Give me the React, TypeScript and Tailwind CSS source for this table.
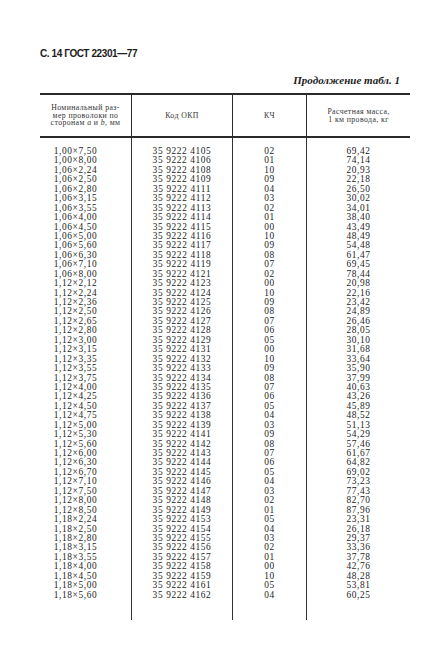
const rows: [string, string, string, string][] = [
  ['1,00×7,50', '4105', '02', '69,42'],
  ['1,00×8,00', '4106', '01', '74,14'],
  ['1,06×2,24', '4108', '10', '20,93'],
  ['1,06×2,50', '4109', '09', '22,18'],
  ['1,06×2,80', '4111', '04', '26,50'],
  ['1,06×3,15', '4112', '03', '30,02'],
  ['1,06×3,55', '4113', '02', '34,01'],
  ['1,06×4,00', '4114', '01', '38,40'],
  ['1,06×4,50', '4115', '00', '43,49'],
  ['1,06×5,00', '4116', '10', '48,49'],
  ['1,06×5,60', '4117', '09', '54,48'],
  ['1,06×6,30', '4118', '08', '61,47'],
  ['1,06×7,10', '4119', '07', '69,45'],
  ['1,06×8,00', '4121', '02', '78,44'],
  ['1,12×2,12', '4123', '00', '20,98'],
  ['1,12×2,24', '4124', '10', '22,16'],
  ['1,12×2,36', '4125', '09', '23,42'],
  ['1,12×2,50', '4126', '08', '24,89'],
  ['1,12×2,65', '4127', '07', '26,46'],
  ['1,12×2,80', '4128', '06', '28,05'],
  ['1,12×3,00', '4129', '05', '30,10'],
  ['1,12×3,15', '4131', '00', '31,68'],
  ['1,12×3,35', '4132', '10', '33,64'],
  ['1,12×3,55', '4133', '09', '35,90'],
  ['1,12×3,75', '4134', '08', '37,99'],
  ['1,12×4,00', '4135', '07', '40,63'],
  ['1,12×4,25', '4136', '06', '43,26'],
  ['1,12×4,50', '4137', '05', '45,89'],
  ['1,12×4,75', '4138', '04', '48,52'],
  ['1,12×5,00', '4139', '03', '51,13'],
  ['1,12×5,30', '4141', '09', '54,29'],
  ['1,12×5,60', '4142', '08', '57,46'],
  ['1,12×6,00', '4143', '07', '61,67'],
  ['1,12×6,30', '4144', '06', '64,82'],
  ['1,12×6,70', '4145', '05', '69,02'],
  ['1,12×7,10', '4146', '04', '73,23'],
  ['1,12×7,50', '4147', '03', '77,43'],
  ['1,12×8,00', '4148', '02', '82,70'],
  ['1,12×8,50', '4149', '01', '87,96'],
  ['1,18×2,24', '4153', '05', '23,31'],
  ['1,18×2,50', '4154', '04', '26,18'],
  ['1,18×2,80', '4155', '03', '29,37'],
  ['1,18×3,15', '4156', '02', '33,36'],
  ['1,18×3,55', '4157', '01', '37,78'],
  ['1,18×4,00', '4158', '00', '42,76'],
  ['1,18×4,50', '4159', '10', '48,28'],
  ['1,18×5,00', '4161', '05', '53,81'],
  ['1,18×5,60', '4162', '04', '60,25'],
];

export default function App() {
  return (
    <div className="w-[422px] h-[665px] bg-white text-[#1c1c1c] pt-[48px] pl-[40px]">
      {/* Page heading */}
      <div className="font-['Liberation_Sans',sans-serif] font-bold text-[10px] leading-[12px] tracking-[-0.4px]">
        С. 14 ГОСТ 22301—77
      </div>

      <div className="w-[370px] mt-[14px] pr-[10px] text-right font-['Liberation_Serif',serif] italic font-bold text-[11px] leading-[13px]">
        Продолжение табл. 1
      </div>

      {/* Table */}
      <div className="w-[370px] mt-[6px] font-['Liberation_Serif',serif]">
        <div className="grid grid-cols-[91px_101px_74px_104px] h-[45px] border-t-2 border-b-2 border-[#2a2a2a] text-[7.8px] leading-[7.8px] tracking-[0.4px] text-[#333]">
          <div className="flex items-center justify-center text-center">
            <span>
              Номинальный раз-
              <br />
              мер проволоки по
              <br />
              сторонам <i>a</i> и <i>b</i>, мм
            </span>
          </div>
          <div className="flex items-center justify-center border-l border-[#2a2a2a]">Код ОКП</div>
          <div className="flex items-center justify-center border-l border-[#2a2a2a]">КЧ</div>
          <div className="flex items-center justify-center text-center border-l border-[#2a2a2a]">
            <span>
              Расчетная масса,
              <br />
              1 км провода, кг
            </span>
          </div>
        </div>

        <div className="grid grid-cols-[91px_101px_74px_104px] text-[9.4px] leading-[9.43px] tracking-[0.6px]">
          <div className="pt-[9px] pb-[20px] pl-[10px] pr-[30px] text-center">
            {rows.map((r, i) => (
              <div key={i}>{r[0]}</div>
            ))}
          </div>
          <div className="pt-[9px] pb-[20px] text-center border-l border-[#333]">
            {rows.map((r, i) => (
              <div key={i}>35 9222 {r[1]}</div>
            ))}
          </div>
          <div className="pt-[9px] pb-[20px] text-center border-l border-[#333]">
            {rows.map((r, i) => (
              <div key={i}>{r[2]}</div>
            ))}
          </div>
          <div className="pt-[9px] pb-[20px] text-center border-l border-[#333]">
            {rows.map((r, i) => (
              <div key={i}>{r[3]}</div>
            ))}
          </div>
        </div>
      </div>
    </div>
  );
}
